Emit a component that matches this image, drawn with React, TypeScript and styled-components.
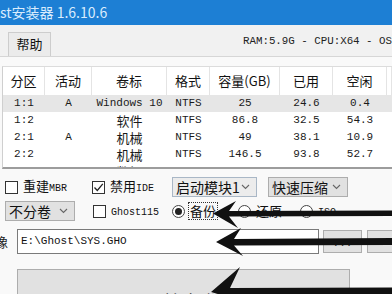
import React from "react";
import styled, { createGlobalStyle } from "styled-components";

const mono = `"Liberation Mono", "Noto Sans CJK SC", monospace`;
const cjk = `"Noto Sans CJK SC", "Noto Sans", sans-serif`;

const Global = createGlobalStyle`
  * { box-sizing: border-box; }
  html, body { margin: 0; padding: 0; background: #f9f9f9; }
  body { width: 392px; height: 294px; overflow: hidden; font-family: ${cjk}; color: #1a1a1a; }
`;

const Window = styled.div`
  position: relative;
  width: 392px;
  height: 294px;
  overflow: hidden;
  background: #f9f9f9;
  display: flex;
  flex-direction: column;
`;

const TitleBar = styled.div`
  height: 25px;
  flex: none;
  background: #1d7fd4;
  color: #d9ecfd;
  font: 14px/25px ${cjk};
  white-space: nowrap;
`;

const MenuBar = styled.div`
  height: 32px;
  flex: none;
  background: #f1f1f1;
  border-bottom: 1px solid #d6d6d6;
  display: flex;
  white-space: nowrap;
`;

const MenuTab = styled.div`
  align-self: flex-end;
  margin-left: 8px;
  width: 47px;
  height: 24px;
  border: 1px solid #cdcdcd;
  border-bottom: 0;
  background: #ebebeb;
  font: 13px/22px ${cjk};
  text-align: center;
  color: #111;
`;

const SysInfo = styled.div`
  flex: none;
  align-self: center;
  margin-left: 192px;
  font: 10.8px/14px ${mono};
  color: #222;
`;

const Table = styled.div`
  margin: 9px 0 0 2px;
  height: 103px;
  flex: none;
  background: #fff;
  border-top: 1px solid #dcdcdc;
  border-left: 1px solid #cfcfcf;
  border-bottom: 2px solid #9c9c9c;
  overflow: hidden;
`;

const cols = "42px 47px 75px 43px 70px 53px 54px 1fr";

const HeaderRow = styled.div`
  display: grid;
  grid-template-columns: ${cols};
  height: 28px;
`;

const HeaderCell = styled.div`
  border-right: 1px solid #e4e4e4;
  font: 13px/28px ${cjk};
  text-align: center;
  color: #111;
  white-space: nowrap;
`;

const DataRow = styled.div<{ $selected?: boolean }>`
  display: grid;
  grid-template-columns: ${cols};
  height: 17px;
  background: ${(p) => (p.$selected ? "#e6e6e6" : "#fff")};
`;

const DataCell = styled.div<{ $cjk?: boolean }>`
  height: 17px;
  display: flex;
  align-items: center;
  justify-content: center;
  font-family: ${(p) => (p.$cjk ? cjk : mono)};
  font-size: ${(p) => (p.$cjk ? 13 : 11)}px;
  line-height: 1;
  color: #1a1a1a;
  white-space: nowrap;
  overflow: hidden;
`;

const Panel = styled.div`
  display: flex;
  flex-direction: column;
  padding-top: 8px;
`;

const Row = styled.div<{ $h: number; $mt: number }>`
  display: flex;
  align-items: center;
  height: ${(p) => p.$h}px;
  margin-top: ${(p) => p.$mt}px;
  white-space: nowrap;
`;

const CheckItem = styled.label<{ $x: number; $w: number }>`
  display: flex;
  align-items: center;
  margin-left: ${(p) => p.$x}px;
  width: ${(p) => p.$w}px;
  flex: none;
`;

const Box = styled.span`
  width: 13px;
  height: 13px;
  flex: none;
  border: 1px solid #333;
  background: #fff;
  display: flex;
  align-items: center;
  justify-content: center;
`;

const Label = styled.span<{ $focus?: boolean }>`
  margin-left: 3px;
  font: 13px/16px ${cjk};
  color: #111;
  padding: 0 1px;
  border: 1px ${(p) => (p.$focus ? "dotted #333" : "solid transparent")};
`;

const Latin = styled.span`
  font: 10px/16px ${mono};
`;

const Radio = styled.span`
  width: 13px;
  height: 13px;
  flex: none;
  border-radius: 50%;
  border: 1px solid #444;
  background: #fff;
  display: flex;
  align-items: center;
  justify-content: center;
`;

const RadioDot = styled.span`
  width: 7px;
  height: 7px;
  border-radius: 50%;
  background: #222;
`;

const Select = styled.div<{ $x: number; $w: number; $light?: boolean }>`
  margin-left: ${(p) => p.$x}px;
  width: ${(p) => p.$w}px;
  height: 20px;
  flex: none;
  display: flex;
  align-items: center;
  justify-content: space-between;
  padding: 0 6px 0 3px;
  background: ${(p) => (p.$light ? "#ececec" : "#e1e1e1")};
  border: 1px solid ${(p) => (p.$light ? "#a9b7c6" : "#adadad")};
  font: 14px/18px ${cjk};
  color: #111;
`;

const FieldLabel = styled.div`
  width: 8px;
  flex: none;
  overflow: hidden;
  direction: rtl;
  font: 13px/16px ${cjk};
  margin-right: 9px;
`;

const PathInput = styled.div`
  width: 302px;
  height: 25px;
  flex: none;
  border: 1px solid #7a7a7a;
  background: #fff;
  padding-left: 3px;
  font: 11px/23px ${mono};
  color: #111;
`;

const SmallButton = styled.div<{ $x: number; $w: number }>`
  margin-left: ${(p) => p.$x}px;
  width: ${(p) => p.$w}px;
  height: 23px;
  flex: none;
  background: #e1e1e1;
  border: 1px solid #adadad;
  font: 11px/24px ${mono};
  text-align: center;
  color: #333;
`;

const BigButton = styled.div`
  margin-left: 17px;
  width: 333px;
  height: 54px;
  flex: none;
  align-self: flex-start;
  background: #e1e1e1;
  border: 1px solid #adadad;
  display: flex;
  align-items: flex-start;
  justify-content: center;
  padding-top: 19px;
  font: 18px/24px ${cjk};
  letter-spacing: 2px;
  color: #111;
`;

const Overlay = styled.svg`
  position: absolute;
  left: 0;
  top: 0;
  pointer-events: none;
`;

const Chevron = () => (
  <svg width="9" height="6" viewBox="0 0 9 6">
    <path d="M1 1 L4.5 4.5 L8 1" fill="none" stroke="#666" strokeWidth="1.1" />
  </svg>
);

const Tick = () => (
  <svg width="11" height="11" viewBox="0 0 11 11">
    <path d="M1.5 5.5 L4.3 8.5 L9.8 1.8" fill="none" stroke="#222" strokeWidth="1.3" />
  </svg>
);

const headers = ["分区", "活动", "卷标", "格式", "容量(GB)", "已用", "空闲", ""];
const rows = [
  ["1:1", "A", "Windows 10", "NTFS", "25", "24.6", "0.4", ""],
  ["1:2", "", "软件", "NTFS", "86.8", "32.5", "54.3", ""],
  ["2:1", "A", "机械", "NTFS", "49", "38.1", "10.9", ""],
  ["2:2", "", "机械", "NTFS", "146.5", "93.8", "52.7", ""],
  ["3:1", "", "数据", "NTFS", "200", "120.4", "79.6", ""],
];

const isCjk = (s: string) => /[\u4e00-\u9fff]/.test(s);

export default function App() {
  return (
    <Window>
      <Global />
      <TitleBar>st安装器 1.6.10.6</TitleBar>
      <MenuBar>
        <MenuTab>帮助</MenuTab>
        <SysInfo>RAM:5.9G - CPU:X64 - OS</SysInfo>
      </MenuBar>
      <Table>
        <HeaderRow>
          {headers.map((h, i) => (
            <HeaderCell key={i}>{h}</HeaderCell>
          ))}
        </HeaderRow>
        {rows.map((r, i) => (
          <DataRow key={i} $selected={i === 0}>
            {r.map((c, j) => (
              <DataCell key={j} $cjk={isCjk(c)}>
                {c}
              </DataCell>
            ))}
          </DataRow>
        ))}
      </Table>
      <Panel>
        <Row $h={20} $mt={0}>
          <CheckItem $x={5} $w={87}>
            <Box />
            <Label>
              重建<Latin>MBR</Latin>
            </Label>
          </CheckItem>
          <CheckItem $x={0} $w={75}>
            <Box>
              <Tick />
            </Box>
            <Label>
              禁用<Latin>IDE</Latin>
            </Label>
          </CheckItem>
          <Select $x={5} $w={85} $light>
            <span>启动模块1</span>
            <Chevron />
          </Select>
          <Select $x={11} $w={80}>
            <span>快速压缩</span>
            <Chevron />
          </Select>
        </Row>
        <Row $h={20} $mt={4}>
          <Select $x={5} $w={70}>
            <span>不分卷</span>
            <Chevron />
          </Select>
          <CheckItem $x={18} $w={79}>
            <Box />
            <Label>
              <Latin>Ghost115</Latin>
            </Label>
          </CheckItem>
          <CheckItem $x={0} $w={66}>
            <Radio>
              <RadioDot />
            </Radio>
            <Label $focus>备份</Label>
          </CheckItem>
          <CheckItem $x={0} $w={62}>
            <Radio />
            <Label>还原</Label>
          </CheckItem>
          <CheckItem $x={0} $w={50}>
            <Radio />
            <Label>
              <Latin>ISO</Latin>
            </Label>
          </CheckItem>
        </Row>
        <Row $h={25} $mt={8}>
          <FieldLabel>像</FieldLabel>
          <PathInput>E:\Ghost\SYS.GHO</PathInput>
          <SmallButton $x={4} $w={39}>...</SmallButton>
          <SmallButton $x={5} $w={30} />
        </Row>
        <Row $h={54} $mt={15}>
          <BigButton>开始备份</BigButton>
        </Row>
      </Panel>
      <Overlay width="392" height="294" viewBox="0 0 392 294">
        <path d="M213 213.5 L236 201 L229 211 L392 210.5 L392 216 L229 216.5 L238 228 Z" fill="#111" />
        <path d="M216 242 L241 228 L234 239 L392 238 L392 245 L234 245.5 L243 256 Z" fill="#111" />
        <path d="M211 292 L240 267 L230 288 L392 287.5 L392 294 L230 295 L238 300 Z" fill="#111" />
      </Overlay>
    </Window>
  );
}
